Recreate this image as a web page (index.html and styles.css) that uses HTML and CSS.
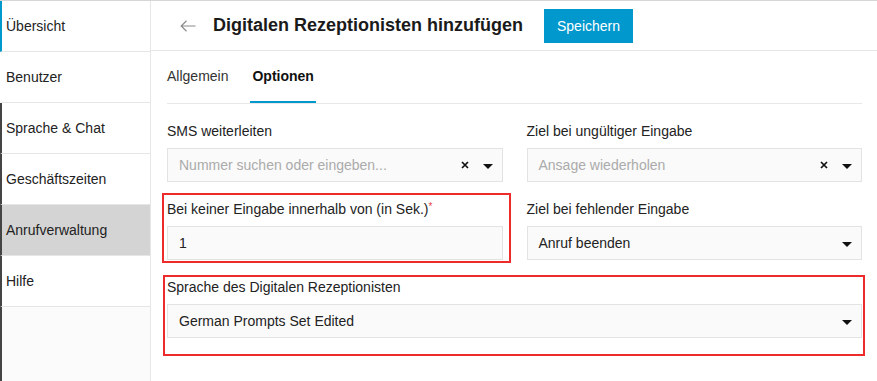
FILE: index.html
```html
<!DOCTYPE html>
<html lang="de">
<head>
  <meta charset="UTF-8" />
  <title>Digitalen Rezeptionisten hinzufügen</title>
  <link rel="stylesheet" href="styles.css">
</head>
<body>
  <div class="app">

    <!-- Sidebar -->
    <aside class="sidebar">
      <div class="nav-item current">Übersicht</div>
      <div class="nav-item plain">Benutzer</div>
      <div class="nav-item">Sprache &amp; Chat</div>
      <div class="nav-item">Geschäftszeiten</div>
      <div class="nav-item selected">Anrufverwaltung</div>
      <div class="nav-item">Hilfe</div>
      <div class="sidebar-fill"></div>
    </aside>

    <!-- Main -->
    <main class="content">
      <header class="page-header">
        <svg class="back-icon" width="16" height="12" viewBox="0 0 16 12">
          <path d="M15.5 6H1M6.5 0.8L1.2 6l5.3 5.2" fill="none" stroke="#8c8c8c" stroke-width="1.2"/>
        </svg>
        <h1>Digitalen Rezeptionisten hinzufügen</h1>
        <button class="save-btn">Speichern</button>
      </header>

      <nav class="tabs">
        <div class="tab">Allgemein</div>
        <div class="tab active">Optionen</div>
      </nav>

      <form class="options-form">
        <div class="field">
          <label>SMS weiterleiten</label>
          <div class="control">
            <span class="value placeholder">Nummer suchen oder eingeben...</span>
            <svg class="clear-icon" width="8" height="8" viewBox="0 0 8 8">
              <path d="M1 1L7 7M7 1L1 7" stroke="#111" stroke-width="1.7"/>
            </svg>
            <span class="caret"></span>
          </div>
        </div>

        <div class="field">
          <label>Ziel bei ungültiger Eingabe</label>
          <div class="control">
            <span class="value placeholder">Ansage wiederholen</span>
            <svg class="clear-icon" width="8" height="8" viewBox="0 0 8 8">
              <path d="M1 1L7 7M7 1L1 7" stroke="#111" stroke-width="1.7"/>
            </svg>
            <span class="caret"></span>
          </div>
        </div>

        <div class="field marked mark-short">
          <label>Bei keiner Eingabe innerhalb von (in Sek.)<sup class="required">*</sup></label>
          <div class="control">
            <span class="value">1</span>
          </div>
        </div>

        <div class="field">
          <label>Ziel bei fehlender Eingabe</label>
          <div class="control">
            <span class="value">Anruf beenden</span>
            <span class="caret"></span>
          </div>
        </div>

        <div class="field wide marked mark-wide">
          <label>Sprache des Digitalen Rezeptionisten</label>
          <div class="control">
            <span class="value">German Prompts Set Edited</span>
            <span class="caret"></span>
          </div>
        </div>
      </form>
    </main>
  </div>
</body>
</html>
```

FILE: styles.css
```css
* {
  box-sizing: border-box;
}

body {
  margin: 0;
  font-family: 'Liberation Sans', Arial, sans-serif;
  font-size: 14px;
  color: #222;
  background: #fff;
  border-top: 1px solid #d6d6d6;
}

.app {
  display: flex;
  height: 380px;
}

/* Sidebar */
.sidebar {
  width: 151px;
  flex-shrink: 0;
  display: flex;
  flex-direction: column;
  border-right: 1px solid #e6e6e6;
  background: #fbfbfb;
}

.nav-item {
  height: 51px;
  display: flex;
  align-items: center;
  padding-left: 4px;
  background: #fff;
  border-left: 2px solid #444;
  border-bottom: 1px solid #e6e6e6;
}

.nav-item.current {
  border-left-color: #0099cc;
}

.nav-item.plain {
  border-left-color: #fff;
}

.nav-item.selected {
  background: #d4d4d4;
}

.sidebar-fill {
  flex: 1;
  border-left: 2px solid #444;
}

/* Main */
.content {
  flex: 1;
  min-width: 0;
}

.page-header {
  height: 50px;
  display: flex;
  align-items: center;
  padding-left: 29px;
  border-bottom: 1px solid #e6e6e6;
}

.back-icon {
  margin-right: 17px;
}

.page-header h1 {
  margin: 0;
  font-size: 18px;
  font-weight: bold;
  color: #1a1a1a;
}

.save-btn {
  margin-left: 21px;
  height: 34px;
  padding: 0 13px;
  background: #0098cd;
  color: #fff;
  border: none;
  font-family: inherit;
  font-size: 14px;
  cursor: pointer;
}

.tabs {
  display: flex;
  gap: 20px;
  margin: 0 15px 0 16px;
  border-bottom: 1px solid #e8e8e8;
}

.tab {
  line-height: 50px;
  padding: 0 2px;
  border-bottom: 2px solid transparent;
  color: #333;
}

.tab:first-child {
  padding-left: 0;
}

.tab.active {
  font-weight: bold;
  color: #111;
  border-bottom-color: #0098cd;
}

/* Form */
.options-form {
  display: grid;
  grid-template-columns: 1fr 1fr;
  column-gap: 24px;
  row-gap: 17px;
  padding: 17px 15px 0 16px;
}

.field {
  position: relative;
}

.field.wide {
  grid-column: 1 / 3;
}

.field label {
  display: block;
  line-height: 20px;
  margin-bottom: 7px;
}

.required {
  color: #e4463f;
  font-size: 10px;
  vertical-align: 4px;
  line-height: 0;
}

.control {
  height: 34px;
  display: flex;
  align-items: center;
  padding: 0 9px 0 11px;
  background: #fafafa;
  border: 1px solid #e3e3e3;
}

.value {
  flex: 1;
  color: #222;
}

.value.placeholder {
  color: #ababab;
}

.clear-icon {
  margin-right: 14px;
}

.caret {
  width: 0;
  height: 0;
  border-left: 5px solid transparent;
  border-right: 5px solid transparent;
  border-top: 5px solid #111;
  margin-top: 2px;
}

/* red annotation frames */
.marked::after {
  content: '';
  position: absolute;
  border: 2px solid #ee2b2b;
  pointer-events: none;
}

.mark-short::after {
  top: -6px;
  left: -5px;
  right: -8px;
  bottom: -3px;
}

.mark-wide::after {
  top: -2px;
  left: -4px;
  right: -3px;
  bottom: -18px;
}
```
